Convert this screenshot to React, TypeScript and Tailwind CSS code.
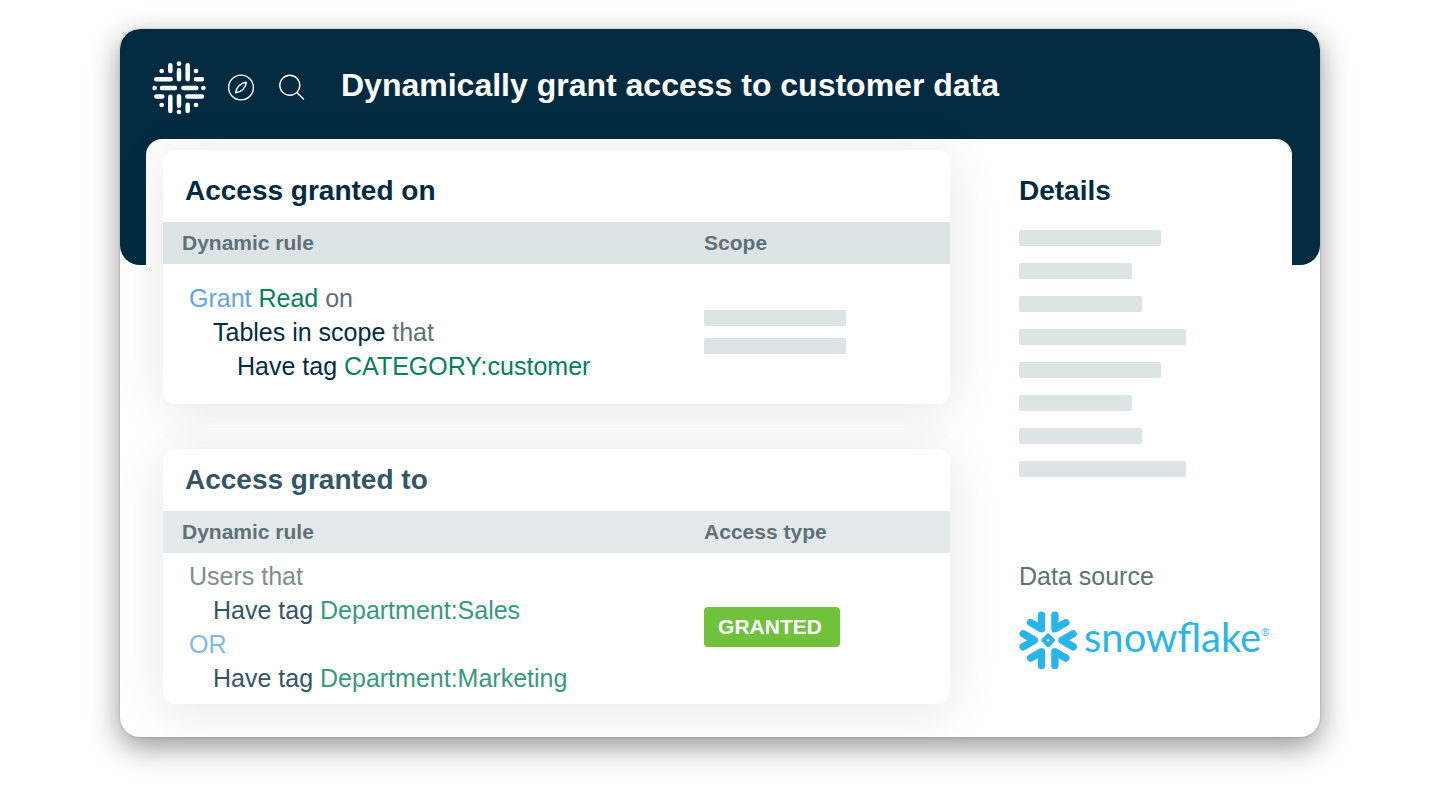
import type { ReactNode } from "react";

const detailBars = [
  "w-[142px]",
  "w-[113px]",
  "w-[123px]",
  "w-[167px]",
  "w-[142px]",
  "w-[113px]",
  "w-[123px]",
  "w-[167px]",
];

function BrandMark() {
  return (
    <svg
      role="img"
      aria-label="Home"
      viewBox="36 35 162 162"
      className="size-[54px] text-white"
      fill="none"
      stroke="currentColor"
      strokeWidth="13.5"
      strokeLinecap="round"
    >
      <path d="M91 47.500V65M117 63V90M143 47.500V90" />
      <path d="M91 142V185M117 141V169M143 166V185" />
      <path d="M49 90H92M168 90H186M66 116H105M130 116H169M49 141.500H67M142 141.500H186" />
      <g fill="currentColor" stroke="none">
        <circle cx="65" cy="65" r="7" />
        <circle cx="117" cy="43" r="7" />
        <circle cx="168" cy="65" r="7" />
        <circle cx="44" cy="116" r="7" />
        <circle cx="190" cy="116" r="7" />
        <circle cx="65" cy="167" r="7" />
        <circle cx="117" cy="188" r="7" />
        <circle cx="168" cy="167" r="7" />
      </g>
    </svg>
  );
}

function CompassIcon() {
  return (
    <svg viewBox="0 0 28 28" className="size-7" fill="none" stroke="currentColor" strokeWidth="1.4" strokeLinejoin="round">
      <circle cx="14" cy="13.500" r="12.400" />
      <path d="M19.300 8.200C19.100 11 17.900 13.300 16.100 15.200C14.300 17.100 11.900 18.500 8.700 18.800C9 16 10.100 13.700 11.900 11.800C13.700 9.900 16.100 8.500 19.300 8.200Z" />
    </svg>
  );
}

function SearchIcon() {
  return (
    <svg viewBox="0 0 28 28" className="size-7" fill="none" stroke="currentColor" strokeWidth="1.4" strokeLinecap="round">
      <circle cx="11.800" cy="11.300" r="10" />
      <path d="M18.900 18.400L25.500 25" />
    </svg>
  );
}

function SnowflakeMark() {
  return (
    <svg viewBox="0 0 60 60" className="size-[60px]" fill="none" stroke="currentColor" strokeWidth="7.400" strokeLinecap="round" strokeLinejoin="round" aria-hidden="true">
      <path d="M23.500 5.200V18.800L12.600 12.600M36.900 5.200V18.800L47.800 12.600" />
      <path d="M23.500 55.600V41.800L12.600 48M36.900 55.600V41.800L47.800 48" />
      <path d="M5.200 23.800L16.400 30.300L5.200 36.800M55.200 23.800L44 30.300L55.200 36.800" />
      <path d="M30.200 25.700L34.800 30.300L30.200 34.900L25.600 30.300Z" strokeWidth="4.400" />
    </svg>
  );
}

function Bar({ width }: { width: string }) {
  return <div className={`h-4 rounded-[2px] bg-[#dde4e6] ${width}`} />;
}

type RuleCardProps = {
  title: string;
  titleClass: string;
  bandClass: string;
  secondColumn: string;
  rulePadding: string;
  rule: ReactNode;
  children: ReactNode;
};

function RuleCard({ title, titleClass, bandClass, secondColumn, rulePadding, rule, children }: RuleCardProps) {
  return (
    <section className="rounded-xl bg-white shadow-[0_6px_50px_rgba(0,0,0,0.1)]">
      <h2 className={`flex items-center pl-[22px] text-[28px] leading-8 font-bold ${titleClass}`}>{title}</h2>
      <table className="w-full table-fixed border-collapse text-left">
        <thead className={`text-[21px] leading-[42px] text-[#5f7178] ${bandClass}`}>
          <tr>
            <th scope="col" className="w-11/16 p-0 pl-[19px] font-bold">
              Dynamic rule
            </th>
            <th scope="col" className="p-0 font-bold">
              {secondColumn}
            </th>
          </tr>
        </thead>
        <tbody>
          <tr>
            <td className={`pr-0 pl-[26px] align-top text-[25px] leading-[34px] ${rulePadding}`}>{rule}</td>
            <td className="p-0 pb-1 align-middle">{children}</td>
          </tr>
        </tbody>
      </table>
    </section>
  );
}

export default function App() {
  return (
    <div className="min-h-screen bg-white pt-[29px] pb-[73px] font-['Liberation_Sans',Arial,sans-serif]">
      <div className="mx-auto w-5/6 overflow-clip rounded-[20px] bg-white shadow-[0_10px_30px_rgba(0,0,0,0.42),0_0_2px_rgba(0,0,0,0.3)]">
        <header className="h-[236px] rounded-[20px] bg-[#022b41] pl-8">
          <div className="flex h-[118px] items-center text-white">
            <BrandMark />
            <nav aria-label="Main" className="ml-[21px] flex gap-[23px]">
              <button type="button" aria-label="Explore">
                <CompassIcon />
              </button>
              <button type="button" aria-label="Search">
                <SearchIcon />
              </button>
            </nav>
            <h1 className="ml-[35px] pb-1.5 text-[32px] leading-10 font-bold whitespace-nowrap">
              Dynamically grant access to customer data
            </h1>
          </div>
        </header>

        <main className="mr-7 ml-[26px] -mt-[126px] flex gap-[69px] rounded-t-[16px] bg-white pt-[11px] pb-[33px] pl-[17px]">
          <div className="flex flex-1 flex-col gap-[45px]">
            <RuleCard
              title="Access granted on"
              titleClass="h-[72px] pt-2.5 text-[#022b41]"
              bandClass="bg-[#dde4e6]"
              secondColumn="Scope"
              rulePadding="pt-[17px] pb-[21px]"
              rule={
                <>
                  <p className="text-[#5f7178]">
                    <span className="text-[#62a6dc]">Grant</span> <span className="text-[#05805f]">Read</span> on
                  </p>
                  <p className="pl-6 text-[#5f7178]">
                    <span className="text-[#022b41]">Tables in scope</span> that
                  </p>
                  <p className="pl-12 text-[#022b41]">
                    Have tag <span className="text-[#05805f]">CATEGORY:customer</span>
                  </p>
                </>
              }
            >
              <div className="flex flex-col gap-3">
                <Bar width="w-[142px]" />
                <Bar width="w-[142px]" />
              </div>
            </RuleCard>

            <RuleCard
              title="Access granted to"
              titleClass="h-[62px] text-[#355567]"
              bandClass="bg-[#e4e9eb]"
              secondColumn="Access type"
              rulePadding="pt-1.5 pb-[9px]"
              rule={
                <>
                  <p className="text-[#7f8d93]">Users that</p>
                  <p className="pl-6 text-[#355567]">
                    Have tag <span className="text-[#37997f]">Department:Sales</span>
                  </p>
                  <p className="text-[#81b8e3]">OR</p>
                  <p className="pl-6 text-[#355567]">
                    Have tag <span className="text-[#37997f]">Department:Marketing</span>
                  </p>
                </>
              }
            >
              <span className="inline-block rounded-[4px] bg-[#70c13c] pr-[18px] pl-3.5 text-[21px] leading-10 font-bold text-white">
                GRANTED
              </span>
            </RuleCard>
          </div>

          <aside className="flex w-[273px] flex-col">
            <h2 className="mt-[25px] text-[28px] leading-8 font-bold text-[#022b41]">Details</h2>
            <div className="mt-[23px] flex flex-col gap-[17px]">
              {detailBars.map((width, index) => (
                <Bar key={index} width={width} />
              ))}
            </div>
            <p className="mt-[82px] text-[25px] leading-[34px] text-[#5f7178]">Data source</p>
            <div className="mt-4 -ml-px flex items-center text-[#29b5e8]">
              <SnowflakeMark />
              <span className="ml-1.5 pb-1.5 font-['Lato',sans-serif] text-[40px] leading-[56px]">snowflake</span>
              <span className="pb-4 text-[11px] leading-3">®</span>
            </div>
          </aside>
        </main>
      </div>
    </div>
  );
}
